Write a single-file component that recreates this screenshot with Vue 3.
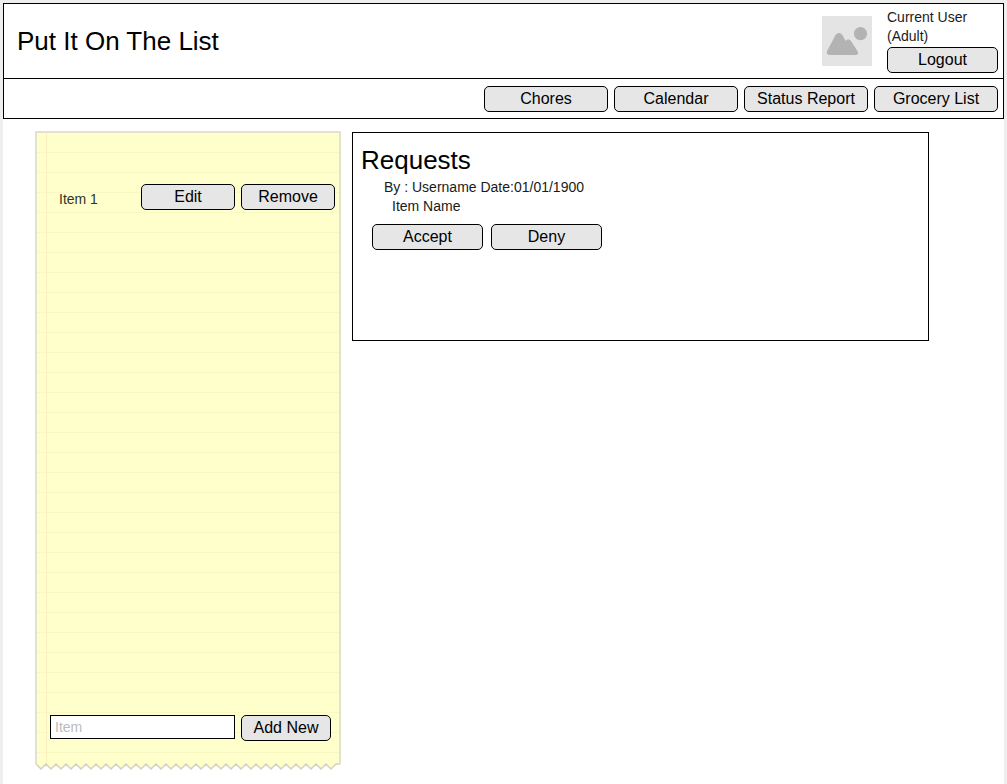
<script setup>
import { ref } from 'vue'

const navItems = ['Chores', 'Calendar', 'Status Report', 'Grocery List']
const items = ref(['Item 1'])
const newItem = ref('')

const teeth = Array.from({ length: 30 }, (_, i) => `L${6 + i * 10} 5L${11 + i * 10} 0`).join('')
const edge = `M1 0${teeth}H305`

function addItem() {
  const name = newItem.value.trim()
  if (name) items.value.push(name)
  newItem.value = ''
}

function removeItem(index) {
  items.value.splice(index, 1)
}
</script>

<template>
  <div class="page">
    <header class="header">
      <div class="banner">
        <h1 class="title">Put It On The List</h1>
        <svg class="avatar" viewBox="0 0 50 50" role="img" aria-label="User picture">
          <rect width="50" height="50" fill="#e4e4e4" />
          <circle cx="38.5" cy="17.700" r="6.6" fill="#b3b3b3" />
          <path
            d="M7.500 39C5 39 4.200 37 5.200 34.800L13.300 19.500C15.200 16 18.800 16 20.700 19.500L23.600 25C25.200 23 27.600 23 29.200 25.300L35.500 35.300C36.800 37.500 35.800 39 33.500 39Z"
            fill="#b3b3b3"
          />
        </svg>
        <div class="user">
          <div>Current User</div>
          <div>(Adult)</div>
          <button class="btn" type="button">Logout</button>
        </div>
      </div>
      <nav class="nav">
        <button v-for="label in navItems" :key="label" class="btn nav-btn" type="button">{{ label }}</button>
      </nav>
    </header>

    <main class="content">
      <section class="note" aria-label="Grocery list">
        <div class="paper">
          <ul class="items">
            <li v-for="(item, index) in items" :key="index" class="item">
              <span class="item-name">{{ item }}</span>
              <button class="btn item-btn" type="button">Edit</button>
              <button class="btn item-btn" type="button" @click="removeItem(index)">Remove</button>
            </li>
          </ul>
          <form class="add" @submit.prevent="addItem">
            <input v-model="newItem" class="field" type="text" placeholder="Item" aria-label="Item" />
            <button class="btn add-btn" type="submit">Add New</button>
          </form>
        </div>
        <svg class="torn" viewBox="0 0 306 7" aria-hidden="true">
          <path :d="edge" fill="#ffffcc" stroke="#d2d2be" stroke-width="1.5" />
        </svg>
      </section>

      <section class="requests">
        <h2 class="requests-title">Requests</h2>
        <p class="by">By : Username Date:01/01/1900</p>
        <p class="name">Item Name</p>
        <div class="actions">
          <button class="btn action-btn" type="button">Accept</button>
          <button class="btn action-btn" type="button">Deny</button>
        </div>
      </section>
    </main>
  </div>
</template>

<style>
body {
  background: #eeeeee;
}
</style>

<style scoped>
.page {
  box-sizing: border-box;
  min-height: calc(100vh - 3px);
  margin: 3px 3px 0;
  background: #ffffff;
  color: #000000;
  font: 14px/19px "Liberation Sans", Arial, sans-serif;
}

.page * {
  box-sizing: border-box;
}

.header {
  border: 1px solid #000000;
}

.banner {
  display: flex;
  align-items: flex-start;
  min-height: 75px;
  padding: 4px 5px 0 13px;
  border-bottom: 1px solid #000000;
}

.title {
  flex: 1;
  margin: 0;
  padding-top: 18px;
  font-size: 26px;
  font-weight: normal;
  line-height: 30px;
}

.avatar {
  width: 50px;
  height: 50px;
  margin: 8px 15px 0 0;
}

.user {
  width: 111px;
  color: #1a1a1a;
}

.user .btn {
  width: 100%;
  margin-top: 1px;
}

.nav {
  display: flex;
  justify-content: flex-end;
  gap: 6px;
  padding: 7px 5px 6px;
}

.btn {
  height: 26px;
  padding: 0;
  border: 1px solid #000000;
  border-radius: 5px;
  background: #e6e6e6;
  color: #000000;
  font: 16px/22px "Liberation Sans", Arial, sans-serif;
  text-align: center;
  white-space: nowrap;
}

.nav-btn {
  width: 124px;
}

.content {
  display: grid;
  grid-template-columns: 306px 1fr;
  align-items: start;
  gap: 11px;
  padding: 12px 75px 14px 32px;
}

.paper {
  display: flex;
  flex-direction: column;
  justify-content: space-between;
  min-height: 633px;
  padding: 51px 4px 23px 13px;
  border: 2px solid #e3e3cd;
  border-bottom: 0;
  background:
    linear-gradient(#fbeebb, #fbeebb) 9px 0 / 1px 100% no-repeat,
    repeating-linear-gradient(#ffffcc 0 19px, #f8f8c4 19px 20px);
}

.items {
  margin: 0;
  padding: 0 0 0 9px;
  list-style: none;
}

.item {
  display: flex;
  align-items: center;
  gap: 6px;
}

.item-name {
  flex: 1;
  padding-top: 4px;
  color: #333322;
}

.item-btn {
  width: 94px;
}

.add {
  display: flex;
  align-items: flex-start;
  gap: 6px;
  padding-right: 4px;
}

.field {
  flex: 1;
  min-width: 0;
  height: 24px;
  padding: 0 4px;
  border: 1px solid #000000;
  border-radius: 0;
  background: #ffffff;
  color: #000000;
  font: 14px/19px "Liberation Sans", Arial, sans-serif;
}

.field::placeholder {
  color: #bbbbbb;
  opacity: 1;
}

.add-btn {
  width: 90px;
}

.torn {
  display: block;
  width: 100%;
  height: 7px;
  overflow: visible;
}

.requests {
  min-height: 209px;
  margin-top: 1px;
  padding: 12px 8px;
  border: 1px solid #000000;
}

.requests-title {
  margin: 0;
  font-size: 26px;
  font-weight: normal;
  line-height: 30px;
}

.by,
.name {
  margin: 0;
  padding-left: 23px;
  color: #1a1a1a;
}

.by {
  padding-top: 3px;
}

.name {
  padding-left: 31px;
}

.actions {
  display: flex;
  gap: 8px;
  padding: 8px 0 0 11px;
}

.action-btn {
  width: 111px;
}
</style>
